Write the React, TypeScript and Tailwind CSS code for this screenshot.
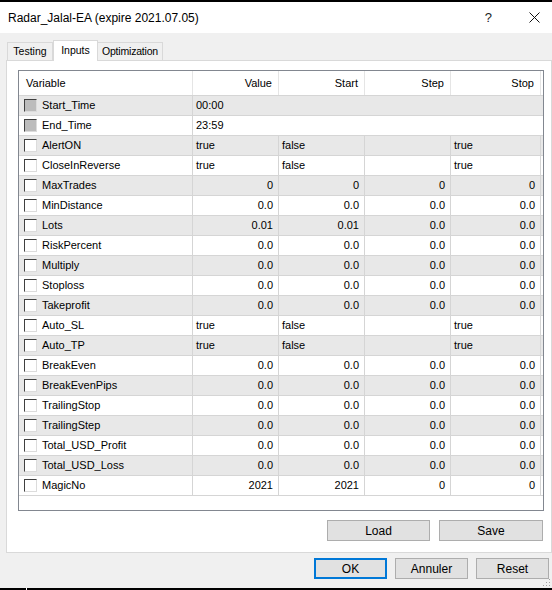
import React from "react";

type RowT =
  | { name: string; kind: "time"; v: string }
  | { name: string; kind: "bool"; v: [string, string, string, string] }
  | { name: string; kind: "num"; v: [string, string, string, string] };

const z = (): [string, string, string, string] => ["0.0", "0.0", "0.0", "0.0"];
const b = (): [string, string, string, string] => ["true", "false", "", "true"];

const rows: RowT[] = [
  { name: "Start_Time", kind: "time", v: "00:00" },
  { name: "End_Time", kind: "time", v: "23:59" },
  { name: "AlertON", kind: "bool", v: b() },
  { name: "CloseInReverse", kind: "bool", v: b() },
  { name: "MaxTrades", kind: "num", v: ["0", "0", "0", "0"] },
  { name: "MinDistance", kind: "num", v: z() },
  { name: "Lots", kind: "num", v: ["0.01", "0.01", "0.0", "0.0"] },
  { name: "RiskPercent", kind: "num", v: z() },
  { name: "Multiply", kind: "num", v: z() },
  { name: "Stoploss", kind: "num", v: z() },
  { name: "Takeprofit", kind: "num", v: z() },
  { name: "Auto_SL", kind: "bool", v: b() },
  { name: "Auto_TP", kind: "bool", v: b() },
  { name: "BreakEven", kind: "num", v: z() },
  { name: "BreakEvenPips", kind: "num", v: z() },
  { name: "TrailingStop", kind: "num", v: z() },
  { name: "TrailingStep", kind: "num", v: z() },
  { name: "Total_USD_Profit", kind: "num", v: z() },
  { name: "Total_USD_Loss", kind: "num", v: z() },
  { name: "MagicNo", kind: "num", v: ["2021", "2021", "0", "0"] },
];

const widths = ["w-[86px]", "w-[86px]", "w-[86px]", "w-[90px]"];

function Check({ disabled }: { disabled: boolean }) {
  return (
    <div
      className={`w-[13px] h-[13px] shrink-0 border border-t-[#404040] border-l-[#404040] border-r-[#dcdcdc] border-b-[#dcdcdc] ${
        disabled ? "bg-[#bcbcbc]" : "bg-white"
      }`}
    />
  );
}

function Row({ r, i }: { r: RowT; i: number }) {
  const bg = i % 2 === 0 ? "bg-[#e8e8e8]" : "bg-white";
  return (
    <div className={`flex h-[20px] border-b border-[#d5d5d5] ${bg}`}>
      <div className="w-[174px] shrink-0 flex items-center border-r border-[#d5d5d5] pl-[5px] gap-[5px]">
        <Check disabled={r.kind === "time"} />
        <span>{r.name}</span>
      </div>
      {r.kind === "time" ? (
        <div className="flex-1 flex items-center pl-[3px]">{r.v}</div>
      ) : (
        <>
          {r.v.map((v, k) => (
            <div
              key={k}
              className={`${widths[k]} shrink-0 flex items-center border-r border-[#d5d5d5] ${
                r.kind === "num" ? "justify-end pr-[5px]" : "pl-[3px]"
              }`}
            >
              {v}
            </div>
          ))}
          <div className="flex-1" />
        </>
      )}
    </div>
  );
}

function Btn({ children, w, primary }: { children: React.ReactNode; w: string; primary?: boolean }) {
  return (
    <div
      className={`${w} h-[21px] flex items-center justify-center bg-[#e1e1e1] ${
        primary ? "border-2 border-[#0078d7]" : "border border-[#adadad]"
      }`}
    >
      {children}
    </div>
  );
}

export default function App() {
  return (
    <div className="relative w-[552px] h-[590px] flex flex-col bg-[#f0f0f0] text-black text-[11px] font-['Liberation_Sans',Arial,sans-serif] overflow-hidden">
      <div className="h-[2px] bg-black shrink-0" />
      {/* title bar */}
      <div className="h-[31px] shrink-0 bg-white flex items-center pl-[8px] text-[12px]">
        <span className="flex-1">Radar_Jalal-EA (expire 2021.07.05)</span>
        <span className="text-[13px] mr-[37px] text-[#222]">?</span>
        <svg width="11" height="11" viewBox="0 0 11 11" className="mr-[12px]">
          <path d="M0.5 0.5 L10.5 10.5 M10.5 0.5 L0.5 10.5" stroke="#111" strokeWidth="1" fill="none" />
        </svg>
      </div>
      {/* body */}
      <div className="flex-1 flex flex-col pl-[6px]">
        <div className="flex items-end h-[27px] pt-[7px] pl-[1px] text-[10.5px]">
          <div className="h-[18px] w-[46px] border border-b-0 border-[#d9d9d9] bg-[#f0f0f0] flex items-center justify-center">
            Testing
          </div>
          <div className="relative z-10 h-[21px] w-[45px] -mb-px border border-b-0 border-[#d9d9d9] bg-white flex items-start pt-[2px] justify-center">
            Inputs
          </div>
          <div className="h-[18px] w-[65px] border border-b-0 border-l-0 border-[#d9d9d9] bg-[#f0f0f0] flex items-center justify-center tracking-[-0.2px]">
            Optimization
          </div>
        </div>
        {/* panel */}
        <div className="h-[493px] w-[546px] border border-[#d9d9d9] bg-white pt-[9px] pl-[11px] flex flex-col">
          <div className="w-[526px] h-[441px] border border-[#828790] flex flex-col">
            <div className="flex h-[25px] border-b border-[#d5d5d5] bg-white">
              <div className="w-[174px] shrink-0 flex items-center border-r border-[#e5e5e5] pl-[7px]">Variable</div>
              {["Value", "Start", "Step", "Stop"].map((h, k) => (
                <div
                  key={h}
                  className={`${widths[k]} shrink-0 flex items-center justify-end pr-[6px] border-r border-[#e5e5e5]`}
                >
                  {h}
                </div>
              ))}
              <div className="flex-1" />
            </div>
            {rows.map((r, i) => (
              <Row key={r.name} r={r} i={i} />
            ))}
          </div>
          <div className="flex justify-end gap-[9px] mt-[9px] pr-[8px] text-[12px]">
            <Btn w="w-[103px]">Load</Btn>
            <Btn w="w-[104px]">Save</Btn>
          </div>
        </div>
        <div className="flex justify-end gap-[8px] mt-[5px] pr-[3px] text-[12px]">
          <Btn w="w-[73px]" primary>
            OK
          </Btn>
          <Btn w="w-[73px]">Annuler</Btn>
          <Btn w="w-[73px]">Reset</Btn>
        </div>
      </div>
      <div className="h-[2px] bg-black shrink-0 flex">
        <div className="w-[26px]" />
        <div className="w-px bg-white" />
      </div>
      <svg className="absolute right-[1px] bottom-[3px]" width="8" height="8" viewBox="0 0 8 8">
        <rect x="6" y="0" width="1" height="1" fill="#a0a0a0" />
        <rect x="3" y="3" width="1" height="1" fill="#a0a0a0" />
        <rect x="6" y="3" width="1" height="1" fill="#a0a0a0" />
        <rect x="0" y="6" width="1" height="1" fill="#a0a0a0" />
        <rect x="3" y="6" width="1" height="1" fill="#a0a0a0" />
        <rect x="6" y="6" width="1" height="1" fill="#a0a0a0" />
      </svg>
    </div>
  );
}
